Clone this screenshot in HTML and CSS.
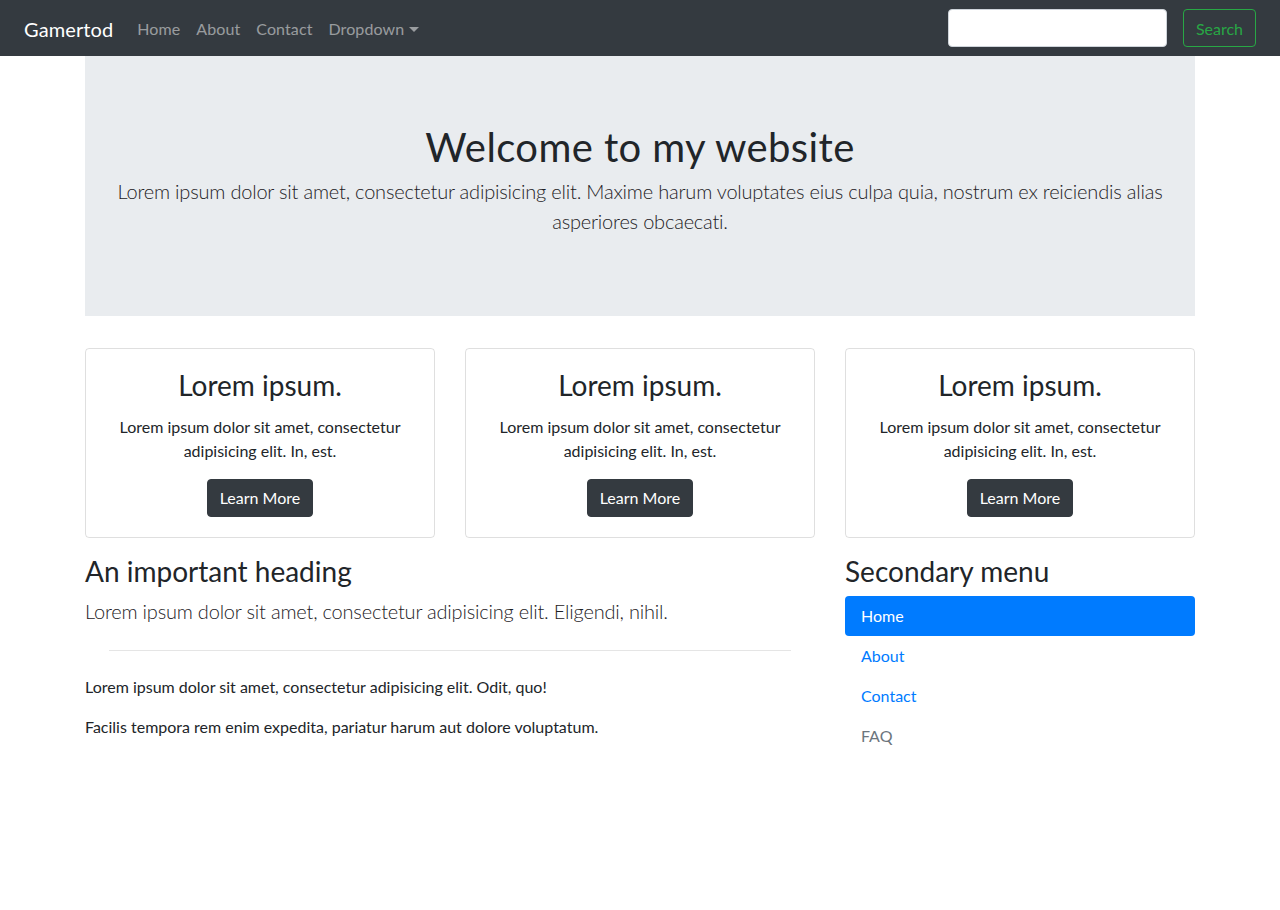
FILE: index.html
```html
<!DOCTYPE html>
<html lang="en">
<head>
<meta charset="utf-8">
<title>Gamertod</title>
<link rel="stylesheet" href="styles.css">
</head>
<body>
<nav class="navbar">
  <a class="brand" href="#">Gamertod</a>
  <ul class="nav-main">
    <li><a class="nav-link" href="#">Home</a></li>
    <li><a class="nav-link" href="#">About</a></li>
    <li><a class="nav-link" href="#">Contact</a></li>
    <li><a class="nav-link dropdown-toggle" href="#">Dropdown</a></li>
  </ul>
  <form class="search-form">
    <input class="search-input" type="search" aria-label="Search">
    <button class="btn btn-outline-success" type="button">Search</button>
  </form>
</nav>

<main class="container">
  <section class="jumbotron">
    <h1 class="jumbo-title">Welcome to my website</h1>
    <p class="lead jumbo-lead">Lorem ipsum dolor sit amet, consectetur adipisicing elit. Maxime harum voluptates eius culpa quia, nostrum ex reiciendis alias asperiores obcaecati.</p>
  </section>

  <div class="cards">
    <div class="card">
      <h3 class="card-title">Lorem ipsum.</h3>
      <p class="card-text">Lorem ipsum dolor sit amet, consectetur adipisicing elit. In, est.</p>
      <a class="btn btn-dark" href="#">Learn More</a>
    </div>
    <div class="card">
      <h3 class="card-title">Lorem ipsum.</h3>
      <p class="card-text">Lorem ipsum dolor sit amet, consectetur adipisicing elit. In, est.</p>
      <a class="btn btn-dark" href="#">Learn More</a>
    </div>
    <div class="card">
      <h3 class="card-title">Lorem ipsum.</h3>
      <p class="card-text">Lorem ipsum dolor sit amet, consectetur adipisicing elit. In, est.</p>
      <a class="btn btn-dark" href="#">Learn More</a>
    </div>
  </div>

  <div class="bottom">
    <div class="main-col">
      <h3 class="heading">An important heading</h3>
      <p class="lead sub-lead">Lorem ipsum dolor sit amet, consectetur adipisicing elit. Eligendi, nihil.</p>
      <hr class="divider">
      <p class="text">Lorem ipsum dolor sit amet, consectetur adipisicing elit. Odit, quo!</p>
      <p class="text">Facilis tempora rem enim expedita, pariatur harum aut dolore voluptatum.</p>
    </div>
    <aside class="side-col">
      <h3 class="heading">Secondary menu</h3>
      <ul class="pills">
        <li><a class="pill active" href="#">Home</a></li>
        <li><a class="pill" href="#">About</a></li>
        <li><a class="pill" href="#">Contact</a></li>
        <li><a class="pill disabled" href="#">FAQ</a></li>
      </ul>
    </aside>
  </div>
</main>
</body>
</html>
```
FILE: styles.css
```css
* { box-sizing: border-box; }
html, body { margin: 0; }
body {
  font-family: "Lato", "Liberation Sans", sans-serif;
  font-size: 16px;
  line-height: 1.5;
  color: #212529;
  background: #fff;
}
a { text-decoration: none; }
h1, h3, p, ul { margin: 0; }
ul { padding: 0; list-style: none; }

/* navbar */
.navbar {
  height: 56px;
  background: #343a40;
  display: flex;
  align-items: center;
  padding: 8px 24px;
}
.brand {
  color: #fff;
  font-size: 20px;
  line-height: 30px;
  padding-top: 1px;
  margin-right: 16px;
  letter-spacing: 0.1px;
}
.nav-main {
  display: flex;
  align-items: center;
}
.nav-link {
  display: block;
  padding: 9px 8px 7px;
  color: rgba(255,255,255,.5);
  line-height: 24px;
  letter-spacing: 0.1px;
}
.dropdown-toggle::after {
  content: "";
  display: inline-block;
  margin-left: 5px;
  vertical-align: 3px;
  border-top: 5px solid;
  border-left: 5px solid transparent;
  border-right: 5px solid transparent;
}
.search-form {
  margin-left: auto;
  display: flex;
  align-items: center;
  gap: 16px;
}
.search-input {
  width: 219px;
  height: 38px;
  border: 1px solid #ced4da;
  border-radius: 4px;
  background: #fff;
  padding: 6px 12px;
  font: inherit;
}
.btn {
  display: inline-block;
  height: 38px;
  padding: 6px 12px;
  font-family: inherit;
  font-size: 16px;
  line-height: 24px;
  border: 1px solid transparent;
  border-radius: 4px;
  cursor: pointer;
  white-space: nowrap;
  text-align: center;
}
.btn-outline-success {
  background: transparent;
  color: #28a745;
  border-color: #28a745;
  width: 73px;
  padding: 7px 0 5px;
}
.btn-dark {
  background: #343a40;
  border-color: #343a40;
  color: #fff;
  width: 106px;
  padding: 6px 0;
}

/* container */
.container {
  width: 1110px;
  margin: 0 auto;
}
.jumbotron {
  background: #e9ecef;
  padding: 64px 32px;
  margin-bottom: 32px;
  text-align: center;
}
.jumbo-title {
  font-size: 40px;
  font-weight: 400;
  line-height: 48px;
  margin-bottom: 5px;
  padding-top: 3px;
  letter-spacing: 0.4px;
}
.lead {
  font-size: 20px;
  font-weight: 300;
  line-height: 30px;
  letter-spacing: -0.2px;
  color: #1d2125;
}
.jumbo-lead { margin-bottom: 16px; }

/* cards */
.cards {
  display: grid;
  grid-template-columns: repeat(3, 1fr);
  gap: 30px;
  margin-bottom: 17px;
}
.card {
  border: 1px solid rgba(0,0,0,.125);
  border-radius: 4px;
  padding: 20px;
  text-align: center;
}
.card-title {
  font-size: 28px;
  font-weight: 400;
  line-height: 33.6px;
  margin-bottom: 12px;
}
.card-text {
  margin: 0 auto 16px;
  max-width: 300px;
}

/* bottom */
.bottom {
  display: grid;
  grid-template-columns: 730px 350px;
  gap: 30px;
}
.heading {
  font-size: 28px;
  font-weight: 400;
  line-height: 33.6px;
  margin-bottom: 8px;
}
.divider {
  border: 0;
  border-top: 1px solid rgba(0,0,0,.1);
  margin: 24px;
}
.text { margin-bottom: 16px; }

.pill {
  display: block;
  padding: 8px 16px;
  line-height: 24px;
  color: #007bff;
  border-radius: 4px;
}
.pill.active {
  background: #007bff;
  color: #fff;
}
.pill.disabled { color: #6c757d; }
```
